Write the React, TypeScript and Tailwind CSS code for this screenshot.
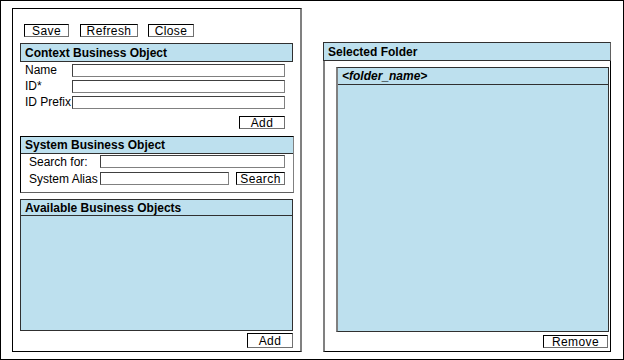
import React from 'react';

const font = { fontFamily: '"Liberation Sans", Arial, sans-serif' };

function Btn({ label, className = '' }: { label: string; className?: string }) {
  return (
    <div
      className={`flex items-center justify-center border border-black border-r-[#707070] border-b-[#707070] bg-white text-[12px] leading-none tracking-[0.4px] text-black ${className}`}
    >
      {label}
    </div>
  );
}

function Input({ className = '' }: { className?: string }) {
  return <div className={`h-[13px] border border-[#404040] border-r-[#808080] border-b-[#808080] bg-white ${className}`} />;
}

function Header({ title, italic = false, className = '' }: { title: string; italic?: boolean; className?: string }) {
  return (
    <div
      className={`flex items-center bg-[#bde0ee] border border-[#303030] pl-[4px] text-[12px] font-bold leading-none text-black ${italic ? 'italic' : ''} ${className}`}
    >
      {title}
    </div>
  );
}

export default function App() {
  return (
    <div style={font} className="relative flex h-[360px] w-[624px] items-start border border-black bg-white pl-[11px] pt-[7px]">
      {/* left panel */}
      <div className="flex h-[344px] w-[290px] flex-col border border-black border-r-2 border-r-[#808080]">
        <div className="ml-[11px] mt-[15px] flex">
          <Btn label="Save" className="h-[13px] w-[45px]" />
          <Btn label="Refresh" className="ml-[11px] h-[13px] w-[58px]" />
          <Btn label="Close" className="ml-[10px] h-[13px] w-[46px]" />
        </div>

        <Header title="Context Business Object" className="ml-[7px] mt-[6px] h-[19px] w-[273px]" />
        <div className="ml-[12px] mt-[2px] flex flex-col gap-[3px] text-[12px] leading-[13px]">
          {['Name', 'ID*', 'ID Prefix'].map((l) => (
            <div key={l} className="flex h-[13px] items-center">
              <span className="w-[47px] whitespace-nowrap">{l}</span>
              <Input className="w-[213px]" />
            </div>
          ))}
        </div>
        <Btn label="Add" className="ml-[226px] mt-[7px] h-[13px] w-[46px]" />

        <div className="ml-[7px] mt-[7px] flex h-[57px] w-[274px] flex-col border border-black border-r-[#808080] border-b-[#606060]">
          <div className="flex h-[17px] items-center border-b border-[#303030] bg-[#bde0ee] pl-[4px] text-[12px] font-bold leading-none">
            System Business Object
          </div>
          <div className="ml-[8px] mt-[1px] flex h-[13px] items-center text-[12px]">
            <span className="w-[71px] whitespace-nowrap">Search for:</span>
            <Input className="w-[185px]" />
          </div>
          <div className="ml-[8px] mt-[4px] flex h-[13px] items-center text-[12px]">
            <span className="w-[71px] whitespace-nowrap">System Alias</span>
            <Input className="w-[129px]" />
            <Btn label="Search" className="ml-[7px] h-[13px] w-[49px]" />
          </div>
        </div>

        <div className="ml-[7px] mt-[6px] flex h-[132px] w-[273px] flex-col border border-[#303030] bg-[#bde0ee]">
          <div className="flex h-[16px] items-center border-b border-[#303030] pl-[4px] text-[12px] font-bold leading-none">
            Available Business Objects
          </div>
        </div>
        <Btn label="Add" className="ml-[234px] mt-[2px] h-[15px] w-[46px]" />
      </div>

      {/* right panel */}
      <div className="ml-[21px] mt-[34px] flex h-[310px] w-[288px] flex-col border-b border-r border-black border-l-2 border-l-[#808080]">
        <Header title="Selected Folder" className="-ml-[2px] h-[19px] w-[288px] border-r-[#606060]" />
        <div className="ml-[11px] mt-[6px] flex h-[265px] w-[273px] flex-col border border-[#303030] border-l-2 border-l-[#808080] bg-[#bde0ee]">
          <div className="flex h-[17px] items-center border-b border-[#303030] pl-[4px] text-[12px] font-bold italic leading-none">
            &lt;folder_name&gt;
          </div>
        </div>
        <Btn label="Remove" className="ml-[218px] mt-[3px] h-[13px] w-[65px]" />
      </div>
    </div>
  );
}
